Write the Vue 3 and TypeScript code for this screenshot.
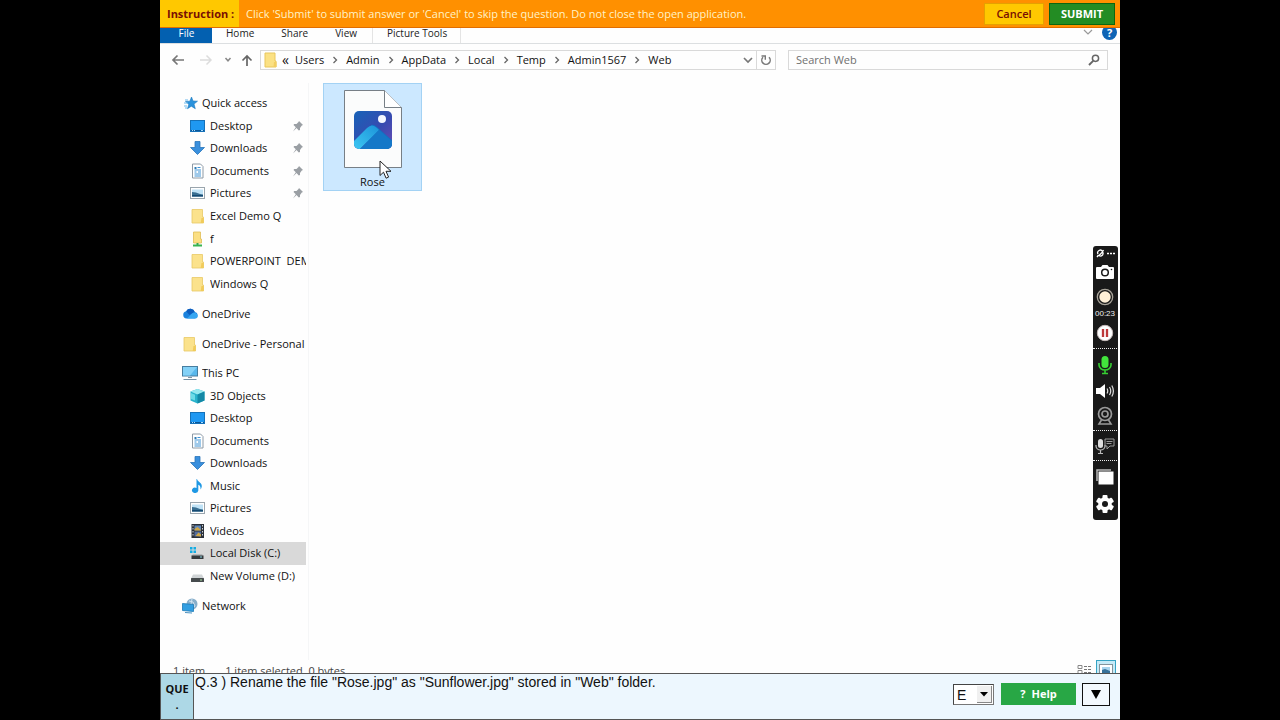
<script setup lang="ts">
import { ref } from 'vue'

interface NavItem {
  label: string
  icon: string
  pinned?: boolean
  child?: boolean
  active?: boolean
}

const tabs: string[] = ['Home', 'Share', 'View']
const crumbs: string[] = ['Users', 'Admin', 'AppData', 'Local', 'Temp', 'Admin1567', 'Web']

const groups: NavItem[][] = [
  [
    { label: 'Quick access', icon: 'star' },
    { label: 'Desktop', icon: 'desktop', child: true, pinned: true },
    { label: 'Downloads', icon: 'down', child: true, pinned: true },
    { label: 'Documents', icon: 'doc', child: true, pinned: true },
    { label: 'Pictures', icon: 'pic', child: true, pinned: true },
    { label: 'Excel Demo Q', icon: 'folder', child: true },
    { label: 'f', icon: 'share', child: true },
    { label: 'POWERPOINT  DEMO', icon: 'folder', child: true },
    { label: 'Windows Q', icon: 'folder', child: true },
  ],
  [{ label: 'OneDrive', icon: 'cloud' }],
  [{ label: 'OneDrive - Personal', icon: 'folder' }],
  [
    { label: 'This PC', icon: 'pc' },
    { label: '3D Objects', icon: 'cube', child: true },
    { label: 'Desktop', icon: 'desktop', child: true },
    { label: 'Documents', icon: 'doc', child: true },
    { label: 'Downloads', icon: 'down', child: true },
    { label: 'Music', icon: 'music', child: true },
    { label: 'Pictures', icon: 'pic', child: true },
    { label: 'Videos', icon: 'video', child: true },
    { label: 'Local Disk (C:)', icon: 'diskc', child: true, active: true },
    { label: 'New Volume (D:)', icon: 'disk', child: true },
  ],
  [{ label: 'Network', icon: 'network' }],
]

const search = ref('')
const language = ref('E')
</script>

<template>
  <div class="screen">
    <div class="stage">
      <header class="instruction">
        <strong class="instruction-label">Instruction :</strong>
        <p class="instruction-text">Click 'Submit' to submit answer or 'Cancel' to skip the question. Do not close the open application.</p>
        <button type="button" class="cancel">Cancel</button>
        <button type="button" class="submit">SUBMIT</button>
      </header>

      <nav class="ribbon" aria-label="Ribbon">
        <button type="button" class="tab file">File</button>
        <button v-for="t in tabs" :key="t" type="button" class="tab">{{ t }}</button>
        <button type="button" class="tab tools">Picture Tools</button>
        <span class="grow"></span>
        <button type="button" class="plain expand" aria-label="Expand ribbon">
          <svg width="10" height="8" viewBox="0 0 10 8"><path d="M1 2l4 4 4-4" fill="none" stroke="#999" stroke-width="1.2" /></svg>
        </button>
        <button type="button" class="plain help-dot" aria-label="Help">?</button>
      </nav>

      <div class="navbar">
        <button type="button" class="plain arrow" aria-label="Back">
          <svg width="14" height="12" viewBox="0 0 14 12"><path d="M13 6H2M6.500 1.500L2 6l4.500 4.500" fill="none" stroke="#777" stroke-width="1.700" /></svg>
        </button>
        <button type="button" class="plain arrow" aria-label="Forward">
          <svg width="14" height="12" viewBox="0 0 14 12"><path d="M1 6h11M7.500 1.500L12 6l-4.500 4.500" fill="none" stroke="#dcdcdc" stroke-width="1.500" /></svg>
        </button>
        <button type="button" class="plain recent" aria-label="Recent locations">
          <svg width="8" height="6" viewBox="0 0 8 6"><path d="M1.500 1L4 3.800 6.500 1" fill="none" stroke="#888" stroke-width="1.500" /></svg>
        </button>
        <button type="button" class="plain up" aria-label="Up">
          <svg width="12" height="13" viewBox="0 0 12 13"><path d="M6 12V2M1.500 6.500L6 2l4.500 4.500" fill="none" stroke="#666" stroke-width="1.700" /></svg>
        </button>
        <div class="address">
          <svg class="addr-folder" width="14" height="16" viewBox="0 0 14 16"><path d="M1 1h10v8h1v6H1z" fill="#fbe184" stroke="#e9c75c" stroke-width="1" /><path d="M10 10h2.500v5H9.500z" fill="#f3cf63" /></svg>
          <span class="more">«</span>
          <template v-for="(c, i) in crumbs" :key="c">
            <button type="button" class="crumb">{{ c }}</button>
            <svg v-if="i < crumbs.length - 1" class="chev" width="6" height="8" viewBox="0 0 6 8"><path d="M1.500 1l3 3-3 3" fill="none" stroke="#666" stroke-width="1.300" /></svg>
          </template>
          <span class="grow"></span>
          <button type="button" class="plain addr-drop" aria-label="Previous locations">
            <svg width="10" height="7" viewBox="0 0 10 7"><path d="M1 1l4 4 4-4" fill="none" stroke="#777" stroke-width="1.700" /></svg>
          </button>
          <button type="button" class="plain refresh" aria-label="Refresh">
            <svg width="12" height="12" viewBox="0 0 12 12"><path d="M3 3.200A4.200 4.200 0 1 0 9 3.200" fill="none" stroke="#777" stroke-width="1.500" /><path d="M1.500 2h3.800v3.800" fill="none" stroke="#777" stroke-width="1.400" /></svg>
          </button>
        </div>
        <label class="search">
          <input v-model="search" type="text" placeholder="Search Web" aria-label="Search Web" />
          <svg width="12" height="12" viewBox="0 0 12 12"><circle cx="7.500" cy="4.300" r="3.100" fill="none" stroke="#666" stroke-width="1.500" /><path d="M5.200 6.800L1 11" stroke="#666" stroke-width="1.900" /></svg>
        </label>
      </div>

      <main class="body">
        <aside class="sidebar">
          <ul v-for="(g, gi) in groups" :key="gi" class="group" :class="{ first: gi === 0, pcs: gi === 3 }">
            <li v-for="n in g" :key="n.label">
              <a href="#" class="node" :class="{ child: n.child, active: n.active }">
                <svg class="ico" width="16" height="16" viewBox="0 0 16 16" aria-hidden="true">
                  <g v-if="n.icon === 'star'">
                    <path d="M9.500 2l1.500 4 4.500.2-3.500 2.900 1.300 4.600-4-2.500-3.800 2.500 1.300-4.500L3.500 6.500l4.400-.3z" fill="#2a92dc" stroke="#1c78bd" stroke-width=".6" />
                    <path d="M3 5h3M2 8h4M2 11h3M3 13h2" stroke="#6bb9ec" stroke-width="1" />
                  </g>
                  <g v-else-if="n.icon === 'desktop'">
                    <rect x=".500" y="2.500" width="14" height="11" fill="#1f98f2" stroke="#1571b9" />
                    <path d="M1 12.500h13" stroke="#0a5596" /><path d="M2 12.500h1M4 12.500h1M11 12.500h2" stroke="#a7dcff" />
                  </g>
                  <g v-else-if="n.icon === 'down'">
                    <path d="M5 1.500h5V7.500H14.500L7.500 14.500.500 7.500H5z" fill="#398fdd" stroke="#2875ba" stroke-width=".8" />
                  </g>
                  <g v-else-if="n.icon === 'doc'">
                    <path d="M2.500 1h8l2.500 2.500V15H2.500z" fill="#fff" stroke="#8d9aa6" />
                    <path d="M7.500 4.500h3M4.500 7h6.500M4.500 9h2M8 9h3M4.500 11h6.500M4.500 13h6.500" stroke="#3e93d6" stroke-width="1.200" /><path d="M4.500 4h2v2h-2z" fill="#2f7bb5" />
                  </g>
                  <g v-else-if="n.icon === 'pic'">
                    <rect x=".500" y="2.500" width="14" height="11" fill="#fff" stroke="#9aa5ad" />
                    <rect x="2" y="4.500" width="11" height="7" fill="#bfe2f6" /><path d="M2 7l4 .5 4 1.500 3 .5v2H2z" fill="#396f92" /><path d="M2 10h11v1.500H2z" fill="#164a72" />
                  </g>
                  <g v-else-if="n.icon === 'folder'">
                    <path d="M2 1.500h10.500V9h1v6H2z" fill="#fbe28c" stroke="#e8c965" stroke-width=".8" /><path d="M11.500 10h2.200v5h-3z" fill="#f1cb5a" />
                  </g>
                  <g v-else-if="n.icon === 'share'">
                    <path d="M3.500 1h7v7h1v4h-8z" fill="#fbdf83" stroke="#dfbd55" stroke-width=".8" /><path d="M7.500 12v2" stroke="#37a44b" stroke-width="2" /><path d="M3 14.500h9" stroke="#37b452" stroke-width="2" />
                  </g>
                  <g v-else-if="n.icon === 'cloud'">
                    <path d="M4.500 12.500a3.700 3.700 0 0 1-.3-7.300A4.700 4.700 0 0 1 12.800 6a3.300 3.300 0 0 1 0 6.500z" fill="#1b82dd" /><path d="M4.200 5.200A4.700 4.700 0 0 1 12.800 6L7.500 9z" fill="#0e5dbd" /><path d="M5 12.500L10 7.500a3.500 3.500 0 0 1 5.800 2.500 2.700 2.700 0 0 1-3 2.500z" fill="#37a7f2" />
                  </g>
                  <g v-else-if="n.icon === 'pc'">
                    <rect x=".500" y="1.500" width="15" height="9.500" fill="#59b8ec" stroke="#477d9f" /><path d="M1 2h14L8 10.500H1z" fill="#83d1f7" /><path d="M6 12.500h4" stroke="#8095a2" /><path d="M1.500 14.500h13" stroke="#7390a5" />
                  </g>
                  <g v-else-if="n.icon === 'cube'">
                    <path d="M7.500 1l7 2.500v9l-7 3-7-3v-9z" fill="#29b2cb" /><path d="M7.500 1l7 2.500-7 3-7-3z" fill="#97e8ef" /><path d="M7.500 6.500l7-3v9l-7 3z" fill="#1388a6" /><path d="M1 5l4 1.700v5.800L1 11z" fill="#6cdbe6" />
                  </g>
                  <g v-else-if="n.icon === 'music'">
                    <path d="M7 1c.5 3 4.800 3.500 4.800 7 0 1-.5 2.500-1.300 3.500.3-2.700-.7-4.200-2.200-4.800v5.800A3.200 2.600 0 1 1 6.500 10V1z" fill="#1e98e4" />
                  </g>
                  <g v-else-if="n.icon === 'video'">
                    <rect x="1.500" y="1" width="12.500" height="14" fill="#2b3039" /><path d="M3 2v12M12.500 2v12" stroke="#c9d0d7" stroke-dasharray="1.500 1.500" /><rect x="4.500" y="2.500" width="6.500" height="5" fill="#6389b8" /><rect x="4.500" y="8.500" width="6.500" height="5" fill="#536d9f" /><path d="M4.500 6l3-2 3.500 3v.5H4.500zM5.500 13l3-3.500 2.500 2v2z" fill="#cfa645" />
                  </g>
                  <g v-else-if="n.icon === 'diskc'">
                    <path d="M0 2h2.500v2.500H0zM3.500 2H6v2.500H3.500zM0 5.500h2.500V8H0zM3.500 5.500H6V8H3.500z" fill="#13ace3" /><path d="M3 9h9l1.500 2H1.500z" fill="#b5babc" /><rect x="1.500" y="10.500" width="12" height="3.500" fill="#35393c" /><path d="M10 12h2" stroke="#8dd9e5" />
                  </g>
                  <g v-else-if="n.icon === 'disk'">
                    <path d="M3 6.500h9l2 4H1z" fill="#d0d4d6" /><rect x="1" y="10" width="13" height="4" rx=".5" fill="#464b4d" /><path d="M10 12h2" stroke="#a5dd9f" />
                  </g>
                  <g v-else>
                    <circle cx="10" cy="6" r="5.500" fill="#88aeca" /><path d="M7 3l4 1 2 4M10 1l-1 5 4 3" stroke="#d0e3f0" fill="none" /><path d="M.500 5.500l11 1v7l-11-1z" fill="#329ee1" stroke="#1b78b5" stroke-width=".8" /><path d="M3 14.500l7 .5" stroke="#4b91bf" />
                  </g>
                </svg>
                <span class="node-label">{{ n.label }}</span>
                <svg v-if="n.pinned" class="pin" width="12" height="12" viewBox="0 0 12 12"><path d="M7 1l4 4-1.200.6L8 8v2L6.800 10.500 4.500 8 1 11.500 3.800 7.300 1.500 5 2.200 4h2.300L6.500 2z" fill="#9a9fa4" /></svg>
              </a>
            </li>
          </ul>
        </aside>

        <section class="files">
          <button type="button" class="tile">
            <svg class="thumb" width="60" height="80" viewBox="0 0 60 80">
              <defs>
                <linearGradient id="back" x1="0" y1="0" x2="1" y2="1"><stop offset="0" stop-color="#1763b8" /><stop offset=".55" stop-color="#374bb0" /><stop offset="1" stop-color="#6a4bb4" /></linearGradient>
                <linearGradient id="hill" x1="1" y1="0" x2="0" y2="1"><stop offset="0" stop-color="#1c94da" /><stop offset="1" stop-color="#3dc8f2" /></linearGradient>
                <clipPath id="frame"><rect x="11" y="22" width="38" height="38" rx="5" /></clipPath>
              </defs>
              <path d="M1.500 1.500h40l17 17v60h-57z" fill="#fbfcfc" stroke="#777f86" /><path d="M41.500 1.500v17h17" fill="#fff" stroke="#777f86" />
              <g clip-path="url(#frame)">
                <rect x="11" y="22" width="38" height="38" fill="url(#back)" />
                <path d="M28 36q3-1 6 2l16 14v9H22z" fill="#1470c2" />
                <path d="M10 53l14-14q5-5 10 0l2 2-19 19h-7z" fill="url(#hill)" />
                <path d="M36 41L17 60h33v-7z" fill="#1578c8" />
              </g>
              <circle cx="39" cy="30" r="4" fill="#f4f7ff" />
            </svg>
            <span>Rose</span>
            <svg class="pointer" width="14" height="20" viewBox="0 0 14 20"><path d="M1 1v14.500l3.500-3.300 2.600 6 2.500-1.100L7 11.300h5z" fill="#fff" stroke="#222" /></svg>
          </button>
        </section>
      </main>

      <div class="status">
        <span>1 item</span>
        <span>1 item selected&nbsp; 0 bytes</span>
        <span class="grow"></span>
        <button type="button" class="plain details" aria-label="Details view">
          <svg width="15" height="12" viewBox="0 0 15 12"><path d="M1 1.500h4v3H1zM1 6.500h4v3H1z" fill="none" stroke="#888" /><path d="M7 2.500h3M11 2.500h3M7 5.500h3M11 5.500h3M7 8.500h3M11 8.500h3" stroke="#777" /></svg>
        </button>
        <button type="button" class="plain icons-view" aria-label="Large icons view">
          <svg width="14" height="12" viewBox="0 0 14 12"><rect x=".500" y=".500" width="13" height="11" fill="#fff" stroke="#83939b" /><rect x="3" y="3" width="8" height="6" fill="#a7d4ee" /><path d="M3 6l3-1 5 2v2H3z" fill="#37719a" /></svg>
        </button>
      </div>

      <footer class="question">
        <strong class="que">QUE<br />.</strong>
        <p>Q.3 ) Rename the file "Rose.jpg" as "Sunflower.jpg" stored in "Web" folder.</p>
        <div class="select">
          <select v-model="language" aria-label="Language"><option>E</option></select>
          <span class="select-arrow"><svg width="8" height="5" viewBox="0 0 8 5"><path d="M0 0h8L4 4.500z" fill="#000" /></svg></span>
        </div>
        <button type="button" class="help"><span>?</span>Help</button>
        <button type="button" class="collapse" aria-label="Collapse"><svg width="10" height="9" viewBox="0 0 10 9"><path d="M0 0h10L5 9z" fill="#000" /></svg></button>
      </footer>

      <div class="recorder" role="toolbar" aria-label="Recorder">
        <div class="rec-top">
          <svg width="8" height="9" viewBox="0 0 8 9"><path d="M1 8L2.500 6M2 5a2.500 2.500 0 0 1 4.500-2.500L7.500 1M6.500 3A2.500 2.500 0 0 1 3 6.500z" fill="none" stroke="#fff" stroke-width="1.300" /></svg>
          <svg width="8" height="3" viewBox="0 0 8 3"><path d="M0 1.500h8" stroke="#fff" stroke-width="1.700" stroke-dasharray="2 1" /></svg>
        </div>
        <button type="button" class="h23" aria-label="Screenshot"><svg width="18" height="14" viewBox="0 0 18 14"><path d="M1 2h4l1.500-2h5L13 2h4q1 0 1 1v10q0 1-1 1H1q-1 0-1-1V3q0-1 1-1z" fill="#fff" /><circle cx="9" cy="7.500" r="3.300" fill="#fff" stroke="#191919" stroke-width="1.500" /><circle cx="15.500" cy="4.500" r=".8" fill="#191919" /></svg></button>
        <button type="button" class="h27" aria-label="Record"><svg width="18" height="18" viewBox="0 0 18 18"><circle cx="9" cy="9" r="7.700" fill="none" stroke="#a7a298" stroke-width="1.300" /><circle cx="9" cy="9" r="5.700" fill="#fff0d7" /></svg></button>
        <time>00:23</time>
        <button type="button" class="h30" aria-label="Pause"><svg width="18" height="18" viewBox="0 0 18 18"><circle cx="9" cy="9" r="7.700" fill="#fff" stroke="#c4b9b8" /><path d="M7 5v8M11 5v8" stroke="#bd393b" stroke-width="2.300" /></svg></button>
        <hr />
        <button type="button" class="h31" aria-label="Microphone"><svg width="16" height="20" viewBox="0 0 16 20"><rect x="4.500" y="1" width="7" height="12" rx="3.500" fill="#42e43c" /><path d="M2 8v2a6 5 0 0 0 12 0V8M8 15v3M5 18.500h6" fill="none" stroke="#36ce32" stroke-width="1.600" /></svg></button>
        <button type="button" class="h21" aria-label="Sound"><svg width="20" height="16" viewBox="0 0 20 16"><path d="M1 5h4l5-4v14l-5-4H1z" fill="#fff" /><path d="M12 5.500q1.500 2.500 0 5M14.500 4q2.500 4 0 8M16.800 2.500q3.200 5.500 0 11" fill="none" stroke="#ddd" stroke-width="1.200" /></svg></button>
        <button type="button" class="h29" aria-label="Webcam"><svg width="16" height="20" viewBox="0 0 16 20"><circle cx="8" cy="8" r="6.500" fill="none" stroke="#9a9a9a" stroke-width="1.700" /><circle cx="8" cy="8" r="3" fill="none" stroke="#9a9a9a" stroke-width="1.700" /><path d="M4.500 14L2 18h12l-2.500-4" fill="none" stroke="#9a9a9a" stroke-width="1.600" /></svg></button>
        <hr />
        <button type="button" class="h29" aria-label="Annotate"><svg width="20" height="18" viewBox="0 0 20 18"><rect x="3" y="2" width="5" height="9" rx="2.500" fill="#ddd" /><path d="M1 8v1a4.500 4 0 0 0 9 0V8M5.500 13v3M3 16.500h5" fill="none" stroke="#bbb" stroke-width="1.200" /><path d="M10 2h9v7h-4l-3 3V9h-2z" fill="none" stroke="#999" /><path d="M11.500 4.500h6M11.500 6.500h5" stroke="#999" /></svg></button>
        <hr />
        <button type="button" class="h31" aria-label="Windows"><svg width="18" height="16" viewBox="0 0 18 16"><path d="M1 12V1h14" fill="none" stroke="#bbb" stroke-width="1.500" /><rect x="2.500" y="2.500" width="15" height="13" fill="#fff" /></svg></button>
        <button type="button" class="h23" aria-label="Settings"><svg width="18" height="18" viewBox="0 0 18 18"><g fill="#fff"><rect x="6.500" y="0" width="5" height="18" rx="1" /><rect x="6.500" y="0" width="5" height="18" rx="1" transform="rotate(60 9 9)" /><rect x="6.500" y="0" width="5" height="18" rx="1" transform="rotate(120 9 9)" /><circle cx="9" cy="9" r="6.800" /></g><circle cx="9" cy="9" r="3" fill="#191919" /></svg></button>
      </div>
    </div>
  </div>
</template>

<style>
body {
  margin: 0;
  background: #000;
}
</style>

<style scoped>
.screen {
  min-height: 100vh;
  padding: 0 12.5%;
  display: flex;
  background: #000;
  font: 11px/16px "Open Sans", "Noto Sans", sans-serif;
  color: #111;
}
.screen *,
.screen {
  box-sizing: border-box;
}
.stage {
  flex: 1;
  min-width: 0;
  position: relative;
  display: flex;
  flex-direction: column;
  background: #fefefe;
}
button {
  font: inherit;
  color: inherit;
  margin: 0;
  padding: 0;
  border: 0;
  background: none;
  white-space: nowrap;
}
svg {
  display: block;
  flex: none;
}
p {
  margin: 0;
}
.grow {
  flex: 1;
}
.plain {
  display: grid;
  place-items: center;
}

.instruction {
  height: 28px;
  display: flex;
  align-items: center;
  background: #ff9000;
  border-bottom: 1px solid #e16d00;
}
.instruction-label {
  align-self: stretch;
  display: flex;
  align-items: center;
  padding-left: 7px;
  width: 79px;
  white-space: nowrap;
  background: #ffc800;
  color: #780e04;
}
.instruction-text {
  flex: 1;
  min-width: 0;
  padding-left: 7px;
  color: #fff3c8;
  white-space: nowrap;
}
.cancel,
.submit {
  height: 22px;
  width: 60px;
  font-weight: 600;
  background: #ffc800;
  color: #780e04;
  border: 1px solid #e5a100;
  margin-right: 5px;
}
.submit {
  width: 66px;
  font-weight: 700;
  background: #238c23;
  border-color: #0c6610;
  color: #fff;
}

.ribbon {
  height: 16px;
  overflow: hidden;
  display: flex;
  border-bottom: 1px solid #dcdfe1;
  font-size: 10px;
  color: #222;
  padding-right: 3px;
}
.tab {
  height: 15px;
  line-height: 10px;
  padding: 0 13px 5px 14px;
}
.file {
  width: 52px;
  background: #0360b0;
  color: #fff;
}
.tools {
  margin-left: 2px;
  border: solid #e4e4e4;
  border-width: 0 1px;
}
.expand {
  height: 8px;
}
.help-dot {
  width: 15px;
  height: 15px;
  margin: -3px 0 0 9px;
  border-radius: 50%;
  background: #0e64b5;
  color: #fff;
  font-size: 11px;
  font-weight: 700;
}

.navbar {
  height: 32px;
  display: flex;
  align-items: center;
  padding: 0 12px 0 11px;
}
.arrow {
  width: 14px;
  margin-right: 14px;
}
.recent {
  width: 8px;
  margin-left: -3px;
}
.up {
  width: 12px;
  margin: 0 7px 0 9px;
}
.address {
  flex: 511;
  min-width: 0;
  height: 20px;
  display: flex;
  align-items: center;
  border: 1px solid #d9d9d9;
  padding-left: 3px;
}
.more {
  margin: 0 6px 0 4px;
  font-size: 14px;
}
.chev {
  margin: 0 8px;
}
.addr-drop {
  width: 17px;
}
.refresh {
  width: 19px;
  align-self: stretch;
  border-left: 1px solid #d9d9d9;
}
.search {
  flex: 304;
  min-width: 0;
  height: 20px;
  margin-left: 12px;
  display: flex;
  align-items: center;
  border: 1px solid #d9d9d9;
  padding: 0 7px;
}
.search input {
  flex: 1;
  min-width: 0;
  border: 0;
  padding: 0;
  outline: 0;
  background: none;
  font: inherit;
  color: #333;
}
.search input::placeholder {
  color: #707070;
}

.body {
  flex: 1;
  display: flex;
  padding-top: 7px;
}
.sidebar {
  width: 149px;
  padding: 9px 2px 0 0;
  border-right: 1px solid #f5f6f7;
  display: flex;
  flex-direction: column;
  gap: 7px;
}
.group {
  margin: 0;
  padding: 0;
  list-style: none;
  height: 23px;
  display: grid;
  grid-auto-rows: 1fr;
}
.first {
  height: 203px;
}
.pcs {
  height: 225px;
}
.group li {
  min-height: 0;
  min-width: 0;
}
.node {
  height: 100%;
  display: flex;
  align-items: center;
  gap: 4px;
  padding-left: 22px;
  color: inherit;
  text-decoration: none;
}
.child {
  padding-left: 30px;
}
.active {
  background: #d9d9d9;
}
.node-label {
  flex: 1;
  min-width: 0;
  overflow: hidden;
  white-space: pre;
}
.pin {
  margin-right: 2px;
}

.files {
  flex: 1;
  padding-left: 14px;
}
.tile {
  position: relative;
  width: 99px;
  height: 108px;
  display: flex;
  flex-direction: column;
  align-items: center;
  justify-content: space-between;
  padding: 5px 0 0;
  background: #cce8ff;
  border: 1px solid #a3d2f4;
}
.pointer {
  position: absolute;
  left: 55px;
  top: 76px;
}

.status {
  height: 13px;
  overflow: hidden;
  display: flex;
  align-items: flex-start;
  gap: 20px;
  padding: 0 4px 0 13px;
  line-height: 22px;
  color: #444;
}
.details {
  margin: 4px -16px 0 0;
}
.icons-view {
  width: 20px;
  height: 20px;
  background: #c5eaf7;
  border: 1px solid #35a3c4;
}

.question {
  height: 47px;
  display: flex;
  align-items: flex-start;
  border: solid #555;
  border-width: 1px 0 1px 1px;
  background: #edf7fe;
  padding-right: 10px;
}
.que {
  width: 33px;
  align-self: stretch;
  background: #add8e6;
  border-right: 1px solid #555;
  text-align: center;
  padding-top: 7px;
}
.question p {
  flex: 1;
  padding-left: 1px;
  font: 14px/17px "Liberation Sans", Arial, sans-serif;
}
.select {
  position: relative;
  width: 41px;
  height: 21px;
  margin: 10px 7px 0 0;
  border: 1px solid #777;
  border-top-color: #444;
  border-left-color: #444;
  background: #fff;
}
.select select {
  appearance: none;
  width: 100%;
  height: 100%;
  border: 0;
  padding: 0 0 0 3px;
  background: none;
  font: 14px "Liberation Sans", Arial, sans-serif;
  color: #111;
}
.select-arrow {
  position: absolute;
  inset: 1px 1px 1px auto;
  width: 15px;
  display: grid;
  place-items: center;
  background: #f0f0f0;
  border: 1px solid #888;
  border-width: 0 1px 1px 0;
  pointer-events: none;
}
.help {
  width: 75px;
  height: 22px;
  margin: 9px 6px 0 0;
  background: #28a745;
  color: #fff;
  font-weight: 700;
}
.help span {
  margin-right: 6px;
}
.collapse {
  width: 28px;
  height: 23px;
  margin-top: 9px;
  border: 1px solid #111;
  background: #f3f9fe;
  display: grid;
  place-items: center;
}

.recorder {
  position: absolute;
  right: 2px;
  top: 246px;
  width: 25px;
  padding: 0 1px 5px 0;
  border-radius: 3px;
  background: #191919;
  display: flex;
  flex-direction: column;
}
.rec-top {
  height: 14px;
  display: flex;
  align-items: center;
  justify-content: center;
  gap: 3px;
}
.recorder button {
  display: grid;
  place-items: center;
}
.h21 {
  height: 21px;
}
.h23 {
  height: 23px;
}
.h27 {
  height: 27px;
}
.h29 {
  height: 29px;
}
.h30 {
  height: 30px;
}
.h31 {
  height: 31px;
}
.recorder time {
  font: 8px/8px "Liberation Sans", Arial, sans-serif;
  color: #eee;
  text-align: center;
}
.recorder hr {
  width: 100%;
  margin: 0;
  border: 0;
  border-top: 1px dotted #eee;
}
</style>
